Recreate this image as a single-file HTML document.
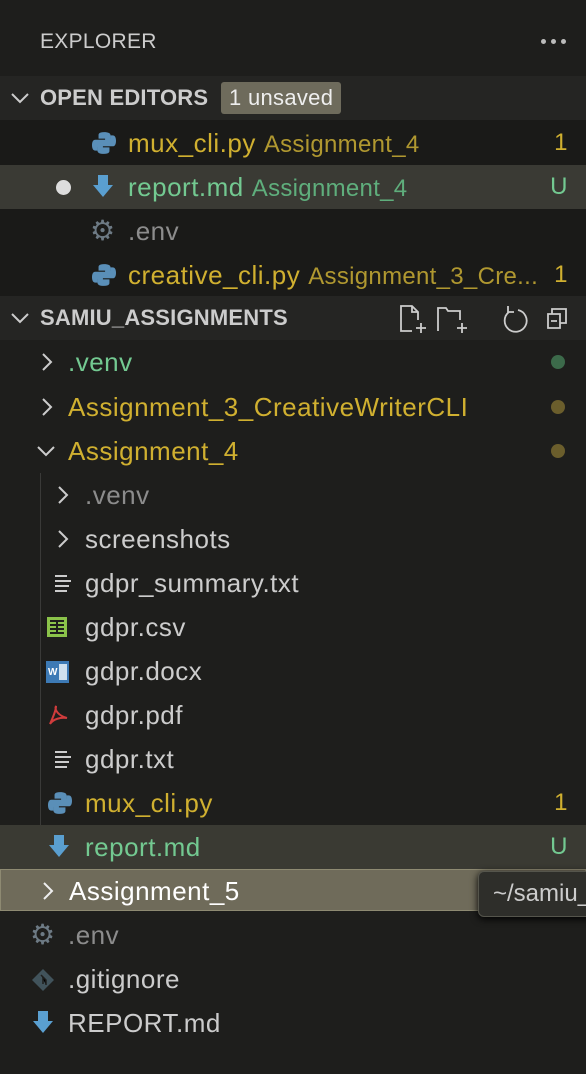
<!DOCTYPE html><html><head><style>
body{margin:0;width:586px;height:1074px;background:#1e1e1c;font-family:"Liberation Sans",sans-serif;overflow:hidden;position:relative;color:#ccc}
.r{position:absolute;left:0;width:586px;height:44px;line-height:44px;font-size:26px;letter-spacing:0.5px;white-space:nowrap}
.t{position:absolute}
.y{color:#d0b030}.g{color:#73c991}.d{color:#8c8c8c}.w{color:#cccccc}
.yd{color:#b09830;font-size:24px;letter-spacing:0.3px;margin-left:8px}.gd{color:#5fae7c;font-size:24px;letter-spacing:0.3px;margin-left:8px}
.badge{position:absolute;right:18px;font-size:24px}
.dot{position:absolute;right:21px;top:15px;width:14px;height:14px;border-radius:50%}
svg{position:absolute}
</style></head><body>
<div class="r" style="top:20px"><span class="t w" style="left:40px;font-size:21px;letter-spacing:0.3px">EXPLORER</span>
<span style="position:absolute;left:541px;top:19px;width:5px;height:5px;border-radius:50%;background:#bbb"></span>
<span style="position:absolute;left:551px;top:19px;width:5px;height:5px;border-radius:50%;background:#bbb"></span>
<span style="position:absolute;left:561px;top:19px;width:5px;height:5px;border-radius:50%;background:#bbb"></span></div>
<div class="r" style="top:76px;background:#252523"><svg style="left:10px;top:14px" width="20" height="16" viewBox="0 0 20 16"><path d="M2 4l8 8 8-8" stroke="#ccc" stroke-width="2" fill="none"/></svg>
<span class="t" style="left:40px;font-size:22px;font-weight:bold;color:#ccc;letter-spacing:0.2px">OPEN EDITORS</span>
<span class="t" style="left:221px;top:6px;height:32px;line-height:32px;padding:0 8px;background:#6e6b5c;border-radius:3px;color:#eee;font-size:22px;letter-spacing:0.3px">1 unsaved</span></div>
<div style="position:absolute;top:120px;left:0;width:586px;height:176px;background:#1a1a18"></div>
<div class="r" style="top:121px"><svg style="left:92px;top:10px" width="24" height="24" viewBox="0 0 22 22"><path d="M11 1c-5 0-5 2-5 3v3h6v1H3c-2 0-3 2-3 5s1 5 3 5h2v-3c0-2 2-4 4-4h5c2 0 3-1 3-3V4c0-2-2-3-6-3z" fill="#5a8fb8"/><path d="M11 21c5 0 5-2 5-3v-3h-6v-1h9c2 0 3-2 3-5s-1-5-3-5h-2v3c0 2-2 4-4 4H8c-2 0-3 1-3 3v4c0 2 2 3 6 3z" fill="#5a8fb8"/></svg>
<span class="t y" style="left:128px">mux_cli.py<span class="yd">Assignment_4</span></span><span class="badge y">1</span></div>
<div class="r" style="top:165px;background:#3a3a34"><span style="position:absolute;left:56px;top:15px;width:15px;height:15px;border-radius:50%;background:#ddd"></span>
<svg style="left:92px;top:10px" width="22" height="24" viewBox="0 0 22 24"><path d="M6 0h10v10h5L11 22 1 10h5z" fill="#5a9fd0"/></svg>
<span class="t g" style="left:128px">report.md<span class="gd">Assignment_4</span></span><span class="badge g">U</span></div>
<div class="r" style="top:209px"><span class="t" style="left:90px;color:#6d7a84;font-size:28px">⚙</span><span class="t d" style="left:128px">.env</span></div>
<div class="r" style="top:253px"><svg style="left:92px;top:10px" width="24" height="24" viewBox="0 0 22 22"><path d="M11 1c-5 0-5 2-5 3v3h6v1H3c-2 0-3 2-3 5s1 5 3 5h2v-3c0-2 2-4 4-4h5c2 0 3-1 3-3V4c0-2-2-3-6-3z" fill="#5a8fb8"/><path d="M11 21c5 0 5-2 5-3v-3h-6v-1h9c2 0 3-2 3-5s-1-5-3-5h-2v3c0 2-2 4-4 4H8c-2 0-3 1-3 3v4c0 2 2 3 6 3z" fill="#5a8fb8"/></svg>
<span class="t y" style="left:128px">creative_cli.py<span class="yd">Assignment_3_Cre...</span></span><span class="badge y">1</span></div>
<div class="r" style="top:296px;background:#252523"><svg style="left:10px;top:14px" width="20" height="16" viewBox="0 0 20 16"><path d="M2 4l8 8 8-8" stroke="#ccc" stroke-width="2" fill="none"/></svg>
<span class="t" style="left:40px;font-size:22px;font-weight:bold;letter-spacing:0.2px">SAMIU_ASSIGNMENTS</span>
<svg style="left:398px;top:8px" width="175" height="30" viewBox="0 0 175 30" fill="none" stroke="#ccc" stroke-width="1.8"><path d="M14 27H3V2h11l6 6v8M14 2v6h6M23 19v10M18 24h10"/><path d="M40 27V4h8l2 3h12v9M64 19v10M59 24h10"/><path d="M120 6a11 11 0 1 1-9 2M110 2v6h6"/><path d="M150 10h12v14h-12zM154 10V5h14v14h-6M153 17h6"/></svg></div>
<div class="r" style="top:340px"><svg style="left:40px;top:12px" width="14" height="20" viewBox="0 0 14 20"><path d="M3 2l8 8-8 8" stroke="#ccc" stroke-width="2" fill="none"/></svg><span class="t g" style="left:68px">.venv</span><span class="dot" style="background:#3c6a4a"></span></div>
<div class="r" style="top:385px"><svg style="left:40px;top:12px" width="14" height="20" viewBox="0 0 14 20"><path d="M3 2l8 8-8 8" stroke="#ccc" stroke-width="2" fill="none"/></svg><span class="t y" style="left:68px">Assignment_3_CreativeWriterCLI</span><span class="dot" style="background:#6b5e2c"></span></div>
<div class="r" style="top:429px"><svg style="left:36px;top:14px" width="20" height="16" viewBox="0 0 20 16"><path d="M2 4l8 8 8-8" stroke="#ccc" stroke-width="2" fill="none"/></svg><span class="t y" style="left:68px">Assignment_4</span><span class="dot" style="background:#6b5e2c"></span></div>
<div style="position:absolute;left:40px;top:473px;width:1px;height:396px;background:#3a3a38"></div>
<div class="r" style="top:473px"><svg style="left:56px;top:12px" width="14" height="20" viewBox="0 0 14 20"><path d="M3 2l8 8-8 8" stroke="#ccc" stroke-width="2" fill="none"/></svg><span class="t d" style="left:85px">.venv</span></div>
<div class="r" style="top:517px"><svg style="left:56px;top:12px" width="14" height="20" viewBox="0 0 14 20"><path d="M3 2l8 8-8 8" stroke="#ccc" stroke-width="2" fill="none"/></svg><span class="t w" style="left:85px">screenshots</span></div>
<div class="r" style="top:561px"><svg style="left:54px;top:13px" width="18" height="18" viewBox="0 0 18 18" stroke="#ccc" stroke-width="2"><path d="M1 2h12M1 7h16M1 12h14M1 17h12"/></svg><span class="t w" style="left:85px">gdpr_summary.txt</span></div>
<div class="r" style="top:605px"><svg style="left:47px;top:12px" width="20" height="20" viewBox="0 0 20 20"><rect width="20" height="20" fill="#8bc34a"/><path d="M3 4h14M3 8h14M3 12h14M3 16h14M10 4v13" stroke="#1e1e1c" stroke-width="2"/></svg><span class="t w" style="left:85px">gdpr.csv</span></div>
<div class="r" style="top:649px"><svg style="left:46px;top:11px" width="23" height="24" viewBox="0 0 23 24"><rect x="0" y="1" width="23" height="22" fill="#3d7ab5"/><rect x="13" y="4" width="8" height="16" fill="#cfe0ee"/><text x="2" y="15" font-size="10" font-weight="bold" fill="#fff" font-family="Liberation Sans">W</text></svg><span class="t w" style="left:85px">gdpr.docx</span></div>
<div class="r" style="top:693px"><svg style="left:47px;top:11px" width="22" height="22" viewBox="0 0 22 22" fill="none" stroke="#d03c3c" stroke-width="2"><path d="M9 2c-2 4 3 10 11 12-6-1-14 1-17 6 3-7 6-13 6-18z"/></svg><span class="t w" style="left:85px">gdpr.pdf</span></div>
<div class="r" style="top:737px"><svg style="left:54px;top:13px" width="18" height="18" viewBox="0 0 18 18" stroke="#ccc" stroke-width="2"><path d="M1 2h12M1 7h16M1 12h14M1 17h12"/></svg><span class="t w" style="left:85px">gdpr.txt</span></div>
<div class="r" style="top:781px"><svg style="left:48px;top:10px" width="24" height="24" viewBox="0 0 22 22"><path d="M11 1c-5 0-5 2-5 3v3h6v1H3c-2 0-3 2-3 5s1 5 3 5h2v-3c0-2 2-4 4-4h5c2 0 3-1 3-3V4c0-2-2-3-6-3z" fill="#5a8fb8"/><path d="M11 21c5 0 5-2 5-3v-3h-6v-1h9c2 0 3-2 3-5s-1-5-3-5h-2v3c0 2-2 4-4 4H8c-2 0-3 1-3 3v4c0 2 2 3 6 3z" fill="#5a8fb8"/></svg><span class="t y" style="left:85px">mux_cli.py</span><span class="badge y">1</span></div>
<div class="r" style="top:825px;background:#3a3a33"><svg style="left:48px;top:10px" width="22" height="24" viewBox="0 0 22 24"><path d="M6 0h10v10h5L11 22 1 10h5z" fill="#5a9fd0"/></svg><span class="t g" style="left:85px">report.md</span><span class="badge g">U</span></div>
<div class="r" style="top:869px;height:42px;line-height:42px;background:#6f6b5a;border:1px solid #8e8a72;box-sizing:border-box"><svg style="left:40px;top:11px" width="14" height="20" viewBox="0 0 14 20"><path d="M3 2l8 8-8 8" stroke="#eee" stroke-width="2" fill="none"/></svg><span class="t" style="left:68px;color:#fff">Assignment_5</span></div>
<div style="position:absolute;left:478px;top:871px;width:130px;height:44px;background:#2e2e2a;border:1px solid #55554c;border-radius:6px;box-shadow:0 2px 8px #000;line-height:44px;font-size:24px;color:#ccc;padding-left:14px;white-space:nowrap">~/samiu_</div>
<div class="r" style="top:913px"><span class="t" style="left:30px;color:#6d7a84;font-size:28px">⚙</span><span class="t d" style="left:68px">.env</span></div>
<div class="r" style="top:957px"><svg style="left:32px;top:12px" width="22" height="22" viewBox="0 0 22 22"><path d="M11 0l11 11-11 11L0 11z" fill="#41535b"/><path d="M9 6l5 5v5M11 9v6" stroke="#1e1e1c" stroke-width="1.5"/></svg><span class="t w" style="left:68px">.gitignore</span></div>
<div class="r" style="top:1001px"><svg style="left:32px;top:10px" width="22" height="24" viewBox="0 0 22 24"><path d="M6 0h10v10h5L11 22 1 10h5z" fill="#5a9fd0"/></svg><span class="t w" style="left:68px">REPORT.md</span></div>
</body></html>
